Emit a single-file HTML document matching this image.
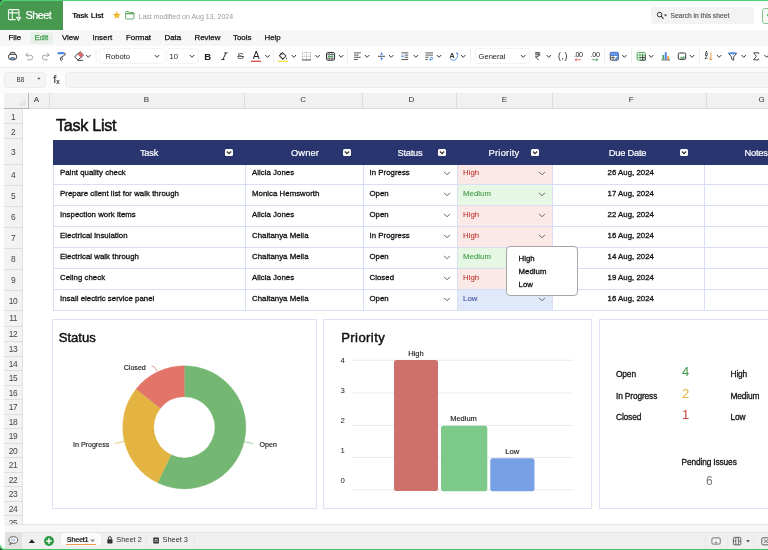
<!DOCTYPE html>
<html><head><meta charset="utf-8"><title>Task List</title>
<style>
*{box-sizing:border-box;margin:0;padding:0}
html,body{width:768px;height:550px;overflow:hidden;background:#fff}
body{font-family:"Liberation Sans",sans-serif;color:#222;position:relative}
#app{position:absolute;left:0;top:0;width:768px;height:550px;overflow:hidden;will-change:transform;background:#fff}
.abs{position:absolute}
.t{position:absolute;white-space:nowrap;line-height:1}
#top{left:0;top:0;width:768px;height:1.2px;background:#52cf72}
#bot{left:0;top:548.6px;width:768px;height:1.4px;background:#3cc760}
#logo{left:0;top:0px;width:63px;height:30px;background:#47994f}
#menubar{left:0;top:30px;width:768px;height:15.5px;background:#f7f7f7}
#toolbar{left:0;top:45.5px;width:768px;height:22px;background:#fff;border-bottom:1px solid #ececec}
#fbar{left:0;top:67.5px;width:768px;height:25px;background:#fcfcfc}
.box{position:absolute;background:#f5f5f5;border:1px solid #ececec;border-radius:3px}
.ch{position:absolute;top:93px;height:15.75px;background:#f1f1f1;border-right:1px solid #dcdcdc;border-bottom:1px solid #d9d9d9;font-size:8px;text-align:center;line-height:14px;color:#333}
.rh{position:absolute;left:4.4px;width:18.4px;padding-top:0.8px;letter-spacing:-0.4px;background:#f3f3f3;border-bottom:1px solid #dedede;border-right:1px solid #e2e2e2;font-size:8.4px;text-align:center;color:#444}
.menu{font-size:7.9px;color:#111;top:34px;-webkit-text-stroke:0.25px currentColor}
.cell{font-size:7.8px;letter-spacing:0.04px;color:#111;-webkit-text-stroke:0.3px currentColor}
.hl{position:absolute;height:1.1px;background:#d8def4}
.vl{position:absolute;width:1.1px;background:#d8def4}
.th{color:#fff;font-size:9.3px;letter-spacing:-0.25px;-webkit-text-stroke:0.2px #fff}
.fbtn{position:absolute;width:8px;height:7px;background:#fff;border-radius:1.5px}
.panel{position:absolute;border:1px solid #dde2f5;background:#fff}
</style></head><body><div id="app">

<div class="abs" id="logo"></div>
<div class="abs" id="menubar"></div><div class="abs" id="toolbar"></div><div class="abs" id="fbar"></div>
<div class="abs" id="top"></div>
<div class="t" style="left:25.5px;top:9.8px;font-size:11px;color:#fff;letter-spacing:-0.6px;-webkit-text-stroke:0.2px #fff">Sheet</div>
<div class="t" style="left:72.3px;top:11.9px;font-size:8px;font-weight:bold;color:#111;letter-spacing:-0.5px;word-spacing:1.2px">Task List</div>
<div class="t" style="left:138.5px;top:12.6px;font-size:7px;color:#9a9a9a">Last modified on Aug 13, 2024</div>
<div class="abs" style="left:651px;top:7px;width:103px;height:17px;background:#f3f3f3;border-radius:3px"></div>
<div class="t" style="left:670.5px;top:13.1px;font-size:6.7px;color:#555;-webkit-text-stroke:0.15px #555">Search in this sheet</div>
<div class="abs" style="left:762px;top:7.5px;width:10px;height:16px;border:1px solid #8cc592;border-radius:3px;background:#f3faf3"></div>
<div class="abs" style="left:30px;top:32px;width:23px;height:11.5px;background:#e7f1e8;border-radius:2px"></div>
<div class="t menu" style="left:8.5px;color:#111">File</div>
<div class="t menu" style="left:34.5px;color:#3c9a4b">Edit</div>
<div class="t menu" style="left:62px;color:#111">View</div>
<div class="t menu" style="left:92.5px;color:#111">Insert</div>
<div class="t menu" style="left:126px;color:#111">Format</div>
<div class="t menu" style="left:164.5px;color:#111">Data</div>
<div class="t menu" style="left:194.5px;color:#111">Review</div>
<div class="t menu" style="left:233px;color:#111">Tools</div>
<div class="t menu" style="left:264.5px;color:#111">Help</div>
<div class="box" style="left:4px;top:72px;width:41.5px;height:15.5px"></div>
<div class="t" style="left:16.5px;top:76.7px;font-size:6.3px;color:#333">B8</div>
<div class="box" style="left:65px;top:72px;width:720px;height:15.5px"></div>
<div class="ch" style="left:4.4px;width:24.4px;border-right:1.6px solid #b9b9b9;border-bottom:1.6px solid #b9b9b9;height:16.4px;border-radius:3px 0 0 0;z-index:2"></div>
<svg class="abs" style="left:17px;top:97px;z-index:3" width="10" height="10" viewBox="17 97 10 10"><rect x="23.85" y="99.14999999999999" width="0.9" height="0.9" fill="#c6c6c6"/><rect x="22.150000000000002" y="100.95" width="0.9" height="0.9" fill="#c6c6c6"/><rect x="23.85" y="100.95" width="0.9" height="0.9" fill="#c6c6c6"/><rect x="20.45" y="102.75" width="0.9" height="0.9" fill="#c6c6c6"/><rect x="22.150000000000002" y="102.75" width="0.9" height="0.9" fill="#c6c6c6"/><rect x="23.85" y="102.75" width="0.9" height="0.9" fill="#c6c6c6"/><rect x="18.75" y="104.55" width="0.9" height="0.9" fill="#c6c6c6"/><rect x="20.45" y="104.55" width="0.9" height="0.9" fill="#c6c6c6"/><rect x="22.150000000000002" y="104.55" width="0.9" height="0.9" fill="#c6c6c6"/><rect x="23.85" y="104.55" width="0.9" height="0.9" fill="#c6c6c6"/></svg>
<div class="ch" style="left:29px;width:20.5px;padding-right:4.6px">A</div>
<div class="ch" style="left:49.5px;width:195.0px">B</div>
<div class="ch" style="left:244.5px;width:118.5px">C</div>
<div class="ch" style="left:363px;width:94px;padding-left:4px">D</div>
<div class="ch" style="left:457px;width:96px">E</div>
<div class="ch" style="left:553px;width:153.5px;padding-left:4px">F</div>
<div class="ch" style="left:706.5px;width:111.0px">G</div>
<div class="rh" style="top:108.75px;height:15.50px;line-height:15.50px">1</div>
<div class="rh" style="top:124.25px;height:15.00px;line-height:15.00px">2</div>
<div class="rh" style="top:139.25px;height:25.25px;line-height:25.25px">3</div>
<div class="rh" style="top:164.50px;height:21.00px;line-height:21.00px">4</div>
<div class="rh" style="top:185.50px;height:21.00px;line-height:21.00px">5</div>
<div class="rh" style="top:206.50px;height:21.00px;line-height:21.00px">6</div>
<div class="rh" style="top:227.50px;height:21.00px;line-height:21.00px">7</div>
<div class="rh" style="top:248.50px;height:21.00px;line-height:21.00px">8</div>
<div class="rh" style="top:269.50px;height:21.00px;line-height:21.00px">9</div>
<div class="rh" style="top:290.50px;height:20.30px;line-height:20.30px">10</div>
<div class="rh" style="top:310.80px;height:15.90px;line-height:15.90px;padding-top:0">11</div>
<div class="rh" style="top:326.70px;height:15.70px;line-height:15.70px;padding-top:0">12</div>
<div class="rh" style="top:342.40px;height:14.50px;line-height:14.50px;padding-top:0">13</div>
<div class="rh" style="top:356.90px;height:14.50px;line-height:14.50px;padding-top:0">14</div>
<div class="rh" style="top:371.40px;height:14.50px;line-height:14.50px;padding-top:0">15</div>
<div class="rh" style="top:385.90px;height:14.50px;line-height:14.50px;padding-top:0">16</div>
<div class="rh" style="top:400.40px;height:14.50px;line-height:14.50px;padding-top:0">17</div>
<div class="rh" style="top:414.90px;height:14.50px;line-height:14.50px;padding-top:0">18</div>
<div class="rh" style="top:429.40px;height:14.50px;line-height:14.50px;padding-top:0">19</div>
<div class="rh" style="top:443.90px;height:14.50px;line-height:14.50px;padding-top:0">20</div>
<div class="rh" style="top:458.40px;height:14.50px;line-height:14.50px;padding-top:0">21</div>
<div class="rh" style="top:472.90px;height:14.50px;line-height:14.50px;padding-top:0">22</div>
<div class="rh" style="top:487.40px;height:14.50px;line-height:14.50px;padding-top:0">23</div>
<div class="rh" style="top:501.90px;height:14.50px;line-height:14.50px;padding-top:0">24</div>
<div class="rh" style="top:516.40px;height:14.50px;line-height:14.50px;padding-top:0">25</div>
<svg class="abs" style="left:0;top:0" width="768" height="93" viewBox="0 0 768 93"><g fill="none" stroke="#f0f8f1" stroke-width="1.15" stroke-linejoin="round"><path d="M19 16.2 V10.8 a1.2 1.2 0 0 0 -1.2 -1.2 H9.7 a1.2 1.2 0 0 0 -1.2 1.2 V18.4 a1.2 1.2 0 0 0 1.2 1.2 H15.6"/><path d="M8.5 12.8 H19 M12.3 9.6 V19.6"/><path d="M16.6 17.4 H20.6 L18.6 20.4 Z"/></g><polygon points="116.80,10.90 117.92,13.76 120.98,13.94 118.61,15.89 119.39,18.86 116.80,17.20 114.21,18.86 114.99,15.89 112.62,13.94 115.68,13.76" fill="#f2b731"/><path d="M125.6 12.6 a1 1 0 0 1 1 -1 H129 l0.9 1 H133 a1 1 0 0 1 1 1 V18 a1 1 0 0 1 -1 1 H126.6 a1 1 0 0 1 -1 -1 Z" fill="#fff" stroke="#5aa462" stroke-width="0.9"/><path d="M125.8 13.6 H134" stroke="#5aa462" stroke-width="1.4"/><circle cx="659.6" cy="14.6" r="2.3" fill="none" stroke="#333" stroke-width="1"/><path d="M661.3 16.4 L663.2 18.4" stroke="#333" stroke-width="1.1" stroke-linecap="round"/><path d="M664 14.6 h3 l-1.5 1.8 z" fill="#333"/><rect x="767" y="14" width="3" height="2.2" fill="#74b87c"/><rect x="10.3" y="52.4" width="4.6" height="2.6" rx="0.6" fill="#fff" stroke="#333" stroke-width="0.9"/><rect x="8.6" y="54.3" width="8" height="5" rx="1.8" fill="#fff" stroke="#333" stroke-width="1"/><rect x="10.6" y="57.6" width="4" height="2.4" rx="0.8" fill="#7aa7f0" stroke="#333" stroke-width="0.7"/><path d="M27.6 53 L25.9 55.2 L28.2 56.6 M26.2 55.2 H30.4 a2.3 2.3 0 0 1 0 4.6 H27.6" fill="none" stroke="#9b9b9b" stroke-width="0.9" stroke-linecap="round" stroke-linejoin="round"/><path d="M47.4 53 L49.1 55.2 L46.8 56.6 M48.8 55.2 H44.6 a2.3 2.3 0 0 0 0 4.6 H47.4" fill="none" stroke="#9b9b9b" stroke-width="0.9" stroke-linecap="round" stroke-linejoin="round"/><rect x="57.6" y="52.1" width="6.4" height="2.2" rx="0.9" fill="#4a86e8"/><path d="M64 53 Q65.8 53.2 65.2 54.8 Q63.5 56 61.6 56.8 Q60.4 57.6 60.4 59.2 Q60.5 60.6 61.6 60.4 Q62.6 60 62.2 58.4 Q62 57.2 61.4 56.9" fill="none" stroke="#333" stroke-width="0.9"/><g transform="rotate(-40 79 56)"><rect x="75.3" y="53.6" width="7.6" height="4.8" rx="1" fill="#fff" stroke="#333" stroke-width="0.9"/><rect x="79.2" y="53.9" width="3.6" height="4.2" rx="0.8" fill="#e06666"/></g><path d="M77.5 60.4 H83" stroke="#333" stroke-width="0.9"/><path d="M86.45 55.30 L88.40 57.30 L90.35 55.30" fill="none" stroke="#3a3a3a" stroke-width="1.0" stroke-linecap="round" stroke-linejoin="round"/><rect x="95.7" y="48.5" width="0.7" height="15" fill="#e6e6e6"/><rect x="273.0" y="48.5" width="0.7" height="15" fill="#e6e6e6"/><rect x="347.09999999999997" y="48.5" width="0.7" height="15" fill="#e6e6e6"/><rect x="470.3" y="48.5" width="0.7" height="15" fill="#e6e6e6"/><rect x="604.3000000000001" y="48.5" width="0.7" height="15" fill="#e6e6e6"/><rect x="631.2" y="48.5" width="0.7" height="15" fill="#e6e6e6"/><rect x="699.0" y="48.5" width="0.7" height="15" fill="#e6e6e6"/><rect x="99.2" y="48.6" width="65" height="14.8" rx="2" fill="#fff" stroke="#efefef" stroke-width="0.8"/><rect x="166.8" y="48.6" width="31.4" height="14.8" rx="2" fill="#fff" stroke="#efefef" stroke-width="0.8"/><rect x="475.4" y="48.6" width="54" height="14.8" rx="2" fill="#fff" stroke="#efefef" stroke-width="0.8"/><path d="M155.05 55.30 L157.00 57.30 L158.95 55.30" fill="none" stroke="#3a3a3a" stroke-width="1.0" stroke-linecap="round" stroke-linejoin="round"/><path d="M190.05 55.30 L192.00 57.30 L193.95 55.30" fill="none" stroke="#3a3a3a" stroke-width="1.0" stroke-linecap="round" stroke-linejoin="round"/><path d="M521.25 55.30 L523.20 57.30 L525.15 55.30" fill="none" stroke="#3a3a3a" stroke-width="1.0" stroke-linecap="round" stroke-linejoin="round"/><rect x="237" y="56" width="7.2" height="0.8" fill="#555"/><rect x="251" y="60.7" width="10" height="1.2" fill="#d33b3b"/><path d="M265.55 55.30 L267.50 57.30 L269.45 55.30" fill="none" stroke="#3a3a3a" stroke-width="1.0" stroke-linecap="round" stroke-linejoin="round"/><rect x="277.6" y="60.7" width="10.4" height="1.2" fill="#f5e33b"/><path d="M279.4 55.6 L282.6 52.6 L286 56 L282.8 59.2 Z" fill="#fff" stroke="#333" stroke-width="1.05" stroke-linejoin="round"/><path d="M280.2 52.6 L282.4 54.8" stroke="#333" stroke-width="1"/><path d="M286.6 57.6 q1 1.3 0 2.1 q-1 -0.8 0 -2.1 z" fill="#333"/><path d="M291.85 55.30 L293.80 57.30 L295.75 55.30" fill="none" stroke="#3a3a3a" stroke-width="1.0" stroke-linecap="round" stroke-linejoin="round"/><g stroke="#8a8a8a" stroke-width="0.7" stroke-dasharray="0.9 0.9" fill="none"><path d="M302.4 52.5 H310.6 M302.4 56.2 H310.6 M302.6 52.5 V59.6 M306.5 52.5 V59.6 M310.4 52.5 V59.6"/></g><rect x="302" y="59.4" width="9" height="1.1" fill="#555"/><path d="M315.65 55.30 L317.60 57.30 L319.55 55.30" fill="none" stroke="#3a3a3a" stroke-width="1.0" stroke-linecap="round" stroke-linejoin="round"/><rect x="326.5" y="52.5" width="8.1" height="7.7" rx="1.4" fill="#fff" stroke="#333" stroke-width="1"/><path d="M326.5 54.6 H334.6 M326.5 58.1 H334.6 M329.2 52.5 V54.6 M331.9 52.5 V54.6 M329.2 58.1 V60.2 M331.9 58.1 V60.2" stroke="#333" stroke-width="0.7"/><path d="M327.8 56.35 H333.3" stroke="#3c9a4b" stroke-width="1"/><path d="M329.6 55.3 L328.2 56.35 L329.6 57.4 M331.5 55.3 L332.9 56.35 L331.5 57.4" stroke="#3c9a4b" stroke-width="0.7" fill="none"/><path d="M339.25 55.30 L341.20 57.30 L343.15 55.30" fill="none" stroke="#3a3a3a" stroke-width="1.0" stroke-linecap="round" stroke-linejoin="round"/><g stroke="#444" stroke-width="0.9"><path d="M354 52.9 H360.8 M354 55.1 H358.6 M354 57.3 H360.8 M354 59.5 H357.8"/></g><path d="M365.15 55.30 L367.10 57.30 L369.05 55.30" fill="none" stroke="#3a3a3a" stroke-width="1.0" stroke-linecap="round" stroke-linejoin="round"/><path d="M378 56.3 H385.2" stroke="#444" stroke-width="0.9"/><g stroke="#3f7fe0" stroke-width="0.8" fill="none"><path d="M381.6 52 V55 M380.2 53.7 L381.6 55.1 L383 53.7 M381.6 60.6 V57.6 M380.2 58.9 L381.6 57.5 L383 58.9"/></g><path d="M389.25 55.30 L391.20 57.30 L393.15 55.30" fill="none" stroke="#3a3a3a" stroke-width="1.0" stroke-linecap="round" stroke-linejoin="round"/><g stroke="#444" stroke-width="0.9"><path d="M401.4 52.9 H408.2 M404.8 55.1 H408.2 M404.8 57.3 H408.2 M401.4 59.5 H408.2"/></g><path d="M401 56.2 H403.6 M402.5 55 L403.8 56.2 L402.5 57.4" stroke="#3f7fe0" stroke-width="0.8" fill="none"/><path d="M413.95 55.30 L415.90 57.30 L417.85 55.30" fill="none" stroke="#3a3a3a" stroke-width="1.0" stroke-linecap="round" stroke-linejoin="round"/><g stroke="#444" stroke-width="0.9"><path d="M425.4 52.9 H433 M425.4 55.1 H433 M425.4 57.3 H428.6 M425.4 59.5 H427.8"/></g><path d="M430 57.3 H431.6 a1.1 1.1 0 0 1 0 2.2 H429.6 M430.5 58.5 L429.4 59.5 L430.5 60.5" stroke="#3f7fe0" stroke-width="0.8" fill="none"/><path d="M437.05 55.30 L439.00 57.30 L440.95 55.30" fill="none" stroke="#3a3a3a" stroke-width="1.0" stroke-linecap="round" stroke-linejoin="round"/><path d="M457.2 53 Q458.6 58.6 454.4 60.2 Q451.2 60.8 450 58.4" fill="none" stroke="#3f7fe0" stroke-width="0.8"/><path d="M456 54 L457.2 52.6 L458.2 54.2" fill="none" stroke="#3f7fe0" stroke-width="0.8"/><path d="M461.25 55.30 L463.20 57.30 L465.15 55.30" fill="none" stroke="#3a3a3a" stroke-width="1.0" stroke-linecap="round" stroke-linejoin="round"/><path d="M535 52.8 H540.4 M535 54.8 H540.4 M535.6 52.8 H536.8 Q539.2 52.9 539.2 54.8 Q539.1 56.7 536.6 56.7 H535.4 L538.8 60.3" fill="none" stroke="#333" stroke-width="0.9"/><path d="M546.85 55.30 L548.80 57.30 L550.75 55.30" fill="none" stroke="#3a3a3a" stroke-width="1.0" stroke-linecap="round" stroke-linejoin="round"/><path d="M575 59.7 H581 M576.6 58.5 L575 59.7 L576.6 60.9" stroke="#d9534f" stroke-width="0.8" fill="none"/><path d="M591.8 59.7 H597.8 M596.2 58.5 L597.8 59.7 L596.2 60.9" stroke="#3c9a4b" stroke-width="0.8" fill="none"/><rect x="610.3" y="52.4" width="8" height="7.8" rx="1.2" fill="#fff" stroke="#333" stroke-width="0.9"/><path d="M610.3 55.2 H618.3 M613 52.4 V60.2 M610.3 57.7 H615" stroke="#333" stroke-width="0.7"/><path d="M610.3 55.2 V53.4 a1 1 0 0 1 1 -1 H617.3 a1 1 0 0 1 1 1 V55.2 Z" fill="#6f9cf0" stroke="#3f7fe0" stroke-width="0.9"/><path d="M615 60.4 L615.4 58.4 L618.2 55.8 L619 56.8 L616.6 59.8 Z" fill="#3f7fe0"/><path d="M622.45 55.30 L624.40 57.30 L626.35 55.30" fill="none" stroke="#3a3a3a" stroke-width="1.0" stroke-linecap="round" stroke-linejoin="round"/><rect x="637.2" y="52.4" width="8.2" height="7.8" rx="1" fill="#fff" stroke="#4aa557" stroke-width="0.9"/><path d="M637.2 55 H645.4 M637.2 57.6 H645.4 M640 52.4 V60.2 M642.7 52.4 V60.2" stroke="#4aa557" stroke-width="0.8"/><path d="M640 57.6 H645.4 M642.7 55 V60.2 M645.4 55 V60.2 M640 60.2 H645.4" stroke="#333" stroke-width="0.7"/><path d="M649.25 55.30 L651.20 57.30 L653.15 55.30" fill="none" stroke="#3a3a3a" stroke-width="1.0" stroke-linecap="round" stroke-linejoin="round"/><rect x="662.4" y="55" width="1.8" height="4.4" fill="#4aa557"/><rect x="664.8" y="52.2" width="1.9" height="7.2" fill="#4a86e8"/><rect x="667.3" y="56.2" width="1.8" height="3.2" fill="#f0913a"/><rect x="661.4" y="59.5" width="8.6" height="0.9" fill="#555"/><rect x="678.3" y="53" width="7.4" height="6.4" rx="1.3" fill="#fff" stroke="#333" stroke-width="1"/><path d="M679.4 58.6 L681.4 56.4 L682.6 57.6 L684 55.8 L684.8 58.6 Z" fill="#4aa557"/><path d="M690.05 55.30 L692.00 57.30 L693.95 55.30" fill="none" stroke="#3a3a3a" stroke-width="1.0" stroke-linecap="round" stroke-linejoin="round"/><path d="M710.9 52.6 V60 M709.5 58.6 L710.9 60.2 L712.3 58.6" stroke="#f0913a" stroke-width="0.9" fill="none"/><path d="M717.15 55.30 L719.10 57.30 L721.05 55.30" fill="none" stroke="#3a3a3a" stroke-width="1.0" stroke-linecap="round" stroke-linejoin="round"/><path d="M728.6 53.4 H736.6 L733.6 57 V60.2 L731.6 59.2 V57 Z" fill="#fff" stroke="#333" stroke-width="0.9" stroke-linejoin="round"/><path d="M728.4 53.3 Q732.6 51.6 736.8 53.3 Q732.6 55 728.4 53.3 Z" fill="#8fb6f5" stroke="#3f7fe0" stroke-width="0.8"/><path d="M741.75 55.30 L743.70 57.30 L745.65 55.30" fill="none" stroke="#3a3a3a" stroke-width="1.0" stroke-linecap="round" stroke-linejoin="round"/><path d="M758.6 54 V52.8 H753.6 L756.4 56.3 L753.6 59.8 H758.6 V58.6" fill="none" stroke="#333" stroke-width="0.9" stroke-linejoin="round"/><path d="M764.65 55.30 L766.60 57.30 L768.55 55.30" fill="none" stroke="#3a3a3a" stroke-width="1.0" stroke-linecap="round" stroke-linejoin="round"/><path d="M37.3 77.8 h3.2 l-1.6 1.9 z" fill="#555"/></svg>
<div class="t" style="left:105.5px;top:52.6px;font-size:7.6px;color:#222">Roboto</div>
<div class="t" style="left:169.5px;top:52.6px;font-size:7.6px;color:#222">10</div>
<div class="t" style="left:478.5px;top:52.6px;font-size:7.6px;color:#222">General</div>
<div class="t" style="left:204.3px;top:51.6px;font-size:9.6px;font-weight:bold;color:#222">B</div>
<svg class="abs" style="left:220px;top:50px" width="10" height="12" viewBox="220 50 10 12"><path d="M224.3 52.9 H227.5 M221.3 59.5 H224.5 M225.9 52.9 L222.9 59.5" fill="none" stroke="#222" stroke-width="0.95"/></svg>
<div class="t" style="left:237.3px;top:51.4px;font-size:9.9px;color:#444">S</div>
<div class="t" style="left:252.8px;top:50.6px;font-size:10.4px;color:#222">A</div>
<div class="t" style="left:449.6px;top:51.6px;font-size:7.2px;font-weight:bold;color:#333">A</div>
<div class="t" style="left:558px;top:51.8px;font-size:8.6px;color:#222;letter-spacing:0.6px">(,)</div>
<div class="t" style="left:574px;top:51.4px;font-size:7.2px;color:#222;letter-spacing:-0.45px">.00</div>
<div class="t" style="left:590.8px;top:51.4px;font-size:7.2px;color:#222;letter-spacing:-0.45px">.00</div>
<div class="t" style="left:704.8px;top:52px;font-size:4.6px;font-weight:bold;color:#222;line-height:4.2px;white-space:normal;width:4px">A<br>Z</div>
<div class="t" style="left:53.2px;top:74.3px;font-size:11.5px;color:#333">f</div>
<div class="t" style="left:56.3px;top:78.8px;font-size:6.6px;color:#333;-webkit-text-stroke:0.2px #333">x</div>
<div class="t" style="left:56px;top:117.3px;font-size:16.2px;letter-spacing:-0.3px;color:#111;-webkit-text-stroke:0.5px #111">Task List</div>
<div class="abs" style="left:52.5px;top:140px;width:720px;height:24.5px;background:#28356f"></div>
<div class="abs" style="left:457.5px;top:164.5px;width:94.5px;height:19.6px;background:#fbe9e7"></div>
<div class="abs" style="left:457.5px;top:184.1px;width:94.5px;height:21.0px;background:#e6f7e4"></div>
<div class="abs" style="left:457.5px;top:205.1px;width:94.5px;height:21.0px;background:#fbe9e7"></div>
<div class="abs" style="left:457.5px;top:226.1px;width:94.5px;height:21.0px;background:#fbe9e7"></div>
<div class="abs" style="left:457.5px;top:247.1px;width:94.5px;height:21.0px;background:#e6f7e4"></div>
<div class="abs" style="left:457.5px;top:268.1px;width:94.5px;height:21.0px;background:#fbe9e7"></div>
<div class="abs" style="left:457.5px;top:289.1px;width:94.5px;height:21.0px;background:#dfe9fa"></div>
<div class="hl" style="left:52.5px;top:183.6px;width:720px"></div>
<div class="hl" style="left:52.5px;top:204.6px;width:720px"></div>
<div class="hl" style="left:52.5px;top:225.6px;width:720px"></div>
<div class="hl" style="left:52.5px;top:246.6px;width:720px"></div>
<div class="hl" style="left:52.5px;top:267.6px;width:720px"></div>
<div class="hl" style="left:52.5px;top:288.6px;width:720px"></div>
<div class="hl" style="left:52.5px;top:309.6px;width:720px"></div>
<div class="vl" style="left:52.5px;top:164.5px;height:145.8px"></div>
<div class="vl" style="left:245.4px;top:164.5px;height:145.8px"></div>
<div class="vl" style="left:363.2px;top:164.5px;height:145.8px"></div>
<div class="vl" style="left:457px;top:164.5px;height:145.8px"></div>
<div class="vl" style="left:552px;top:164.5px;height:145.8px"></div>
<div class="vl" style="left:704px;top:164.5px;height:145.8px"></div>
<div class="t th" style="left:149px;top:149px;transform:translateX(-50%)">Task</div>
<div class="t th" style="left:305px;top:149px;transform:translateX(-50%);letter-spacing:0.15px">Owner</div>
<div class="t th" style="left:410px;top:149px;transform:translateX(-50%)">Status</div>
<div class="t th" style="left:504px;top:149px;transform:translateX(-50%);letter-spacing:0.25px">Priority</div>
<div class="t th" style="left:627.5px;top:149px;transform:translateX(-50%)">Due Date</div>
<div class="t th" style="left:744.5px;top:149px">Notes</div>
<div class="fbtn" style="left:224.9px;top:148.9px"><svg width="8" height="7" viewBox="0 0 8 7" style="display:block"><path d="M1.9 2.5 L4 4.7 L6.1 2.5" fill="none" stroke="#333" stroke-width="1.2"/></svg></div>
<div class="fbtn" style="left:343.4px;top:148.9px"><svg width="8" height="7" viewBox="0 0 8 7" style="display:block"><path d="M1.9 2.5 L4 4.7 L6.1 2.5" fill="none" stroke="#333" stroke-width="1.2"/></svg></div>
<div class="fbtn" style="left:438.4px;top:148.9px"><svg width="8" height="7" viewBox="0 0 8 7" style="display:block"><path d="M1.9 2.5 L4 4.7 L6.1 2.5" fill="none" stroke="#333" stroke-width="1.2"/></svg></div>
<div class="fbtn" style="left:530.9px;top:148.9px"><svg width="8" height="7" viewBox="0 0 8 7" style="display:block"><path d="M1.9 2.5 L4 4.7 L6.1 2.5" fill="none" stroke="#333" stroke-width="1.2"/></svg></div>
<div class="fbtn" style="left:680.4px;top:148.9px"><svg width="8" height="7" viewBox="0 0 8 7" style="display:block"><path d="M1.9 2.5 L4 4.7 L6.1 2.5" fill="none" stroke="#333" stroke-width="1.2"/></svg></div>
<div class="t cell" style="left:60px;top:169px">Paint quality check</div>
<div class="t cell" style="left:252px;top:169px">Alicia Jones</div>
<div class="t cell" style="left:369.5px;top:169px">In Progress</div>
<div class="t cell" style="left:463px;top:169px;color:#c0392f;-webkit-text-stroke:0.1px currentColor">High</div>
<div class="t cell" style="left:607.5px;top:169px">26 Aug, 2024</div>
<div class="abs" style="left:443px;top:170.5px"><svg width="8" height="5" viewBox="0 0 8 5" style="display:block"><path d="M1 0.8 L4 3.8 L7 0.8" fill="none" stroke="#555" stroke-width="0.9"/></svg></div>
<div class="abs" style="left:538px;top:170.5px"><svg width="8" height="5" viewBox="0 0 8 5" style="display:block"><path d="M1 0.8 L4 3.8 L7 0.8" fill="none" stroke="#555" stroke-width="0.9"/></svg></div>
<div class="t cell" style="left:60px;top:190px">Prepare client list for walk through</div>
<div class="t cell" style="left:252px;top:190px">Monica Hemsworth</div>
<div class="t cell" style="left:369.5px;top:190px">Open</div>
<div class="t cell" style="left:463px;top:190px;color:#3f9a48;-webkit-text-stroke:0.1px currentColor">Medium</div>
<div class="t cell" style="left:607.5px;top:190px">17 Aug, 2024</div>
<div class="abs" style="left:443px;top:191.5px"><svg width="8" height="5" viewBox="0 0 8 5" style="display:block"><path d="M1 0.8 L4 3.8 L7 0.8" fill="none" stroke="#555" stroke-width="0.9"/></svg></div>
<div class="abs" style="left:538px;top:191.5px"><svg width="8" height="5" viewBox="0 0 8 5" style="display:block"><path d="M1 0.8 L4 3.8 L7 0.8" fill="none" stroke="#555" stroke-width="0.9"/></svg></div>
<div class="t cell" style="left:60px;top:211px">Inspection work items</div>
<div class="t cell" style="left:252px;top:211px">Alicia Jones</div>
<div class="t cell" style="left:369.5px;top:211px">Open</div>
<div class="t cell" style="left:463px;top:211px;color:#c0392f;-webkit-text-stroke:0.1px currentColor">High</div>
<div class="t cell" style="left:607.5px;top:211px">22 Aug, 2024</div>
<div class="abs" style="left:443px;top:212.5px"><svg width="8" height="5" viewBox="0 0 8 5" style="display:block"><path d="M1 0.8 L4 3.8 L7 0.8" fill="none" stroke="#555" stroke-width="0.9"/></svg></div>
<div class="abs" style="left:538px;top:212.5px"><svg width="8" height="5" viewBox="0 0 8 5" style="display:block"><path d="M1 0.8 L4 3.8 L7 0.8" fill="none" stroke="#555" stroke-width="0.9"/></svg></div>
<div class="t cell" style="left:60px;top:232px">Electrical insulation</div>
<div class="t cell" style="left:252px;top:232px">Chaitanya Mella</div>
<div class="t cell" style="left:369.5px;top:232px">In Progress</div>
<div class="t cell" style="left:463px;top:232px;color:#c0392f;-webkit-text-stroke:0.1px currentColor">High</div>
<div class="t cell" style="left:607.5px;top:232px">16 Aug, 2024</div>
<div class="abs" style="left:443px;top:233.5px"><svg width="8" height="5" viewBox="0 0 8 5" style="display:block"><path d="M1 0.8 L4 3.8 L7 0.8" fill="none" stroke="#555" stroke-width="0.9"/></svg></div>
<div class="abs" style="left:538px;top:233.5px"><svg width="8" height="5" viewBox="0 0 8 5" style="display:block"><path d="M1 0.8 L4 3.8 L7 0.8" fill="none" stroke="#555" stroke-width="0.9"/></svg></div>
<div class="t cell" style="left:60px;top:253px">Electrical walk through</div>
<div class="t cell" style="left:252px;top:253px">Chaitanya Mella</div>
<div class="t cell" style="left:369.5px;top:253px">Open</div>
<div class="t cell" style="left:463px;top:253px;color:#3f9a48;-webkit-text-stroke:0.1px currentColor">Medium</div>
<div class="t cell" style="left:607.5px;top:253px">14 Aug, 2024</div>
<div class="abs" style="left:443px;top:254.5px"><svg width="8" height="5" viewBox="0 0 8 5" style="display:block"><path d="M1 0.8 L4 3.8 L7 0.8" fill="none" stroke="#555" stroke-width="0.9"/></svg></div>
<div class="abs" style="left:538px;top:254.5px"><svg width="8" height="5" viewBox="0 0 8 5" style="display:block"><path d="M1 0.8 L4 3.8 L7 0.8" fill="none" stroke="#555" stroke-width="0.9"/></svg></div>
<div class="t cell" style="left:60px;top:274px">Celing check</div>
<div class="t cell" style="left:252px;top:274px">Alicia Jones</div>
<div class="t cell" style="left:369.5px;top:274px">Closed</div>
<div class="t cell" style="left:463px;top:274px;color:#c0392f;-webkit-text-stroke:0.1px currentColor">High</div>
<div class="t cell" style="left:607.5px;top:274px">19 Aug, 2024</div>
<div class="abs" style="left:443px;top:275.5px"><svg width="8" height="5" viewBox="0 0 8 5" style="display:block"><path d="M1 0.8 L4 3.8 L7 0.8" fill="none" stroke="#555" stroke-width="0.9"/></svg></div>
<div class="abs" style="left:538px;top:275.5px"><svg width="8" height="5" viewBox="0 0 8 5" style="display:block"><path d="M1 0.8 L4 3.8 L7 0.8" fill="none" stroke="#555" stroke-width="0.9"/></svg></div>
<div class="t cell" style="left:60px;top:295px">Insall electric service panel</div>
<div class="t cell" style="left:252px;top:295px">Chaitanya Mella</div>
<div class="t cell" style="left:369.5px;top:295px">Open</div>
<div class="t cell" style="left:463px;top:295px;color:#3b4fa0;-webkit-text-stroke:0.1px currentColor">Low</div>
<div class="t cell" style="left:607.5px;top:295px">16 Aug, 2024</div>
<div class="abs" style="left:443px;top:296.5px"><svg width="8" height="5" viewBox="0 0 8 5" style="display:block"><path d="M1 0.8 L4 3.8 L7 0.8" fill="none" stroke="#555" stroke-width="0.9"/></svg></div>
<div class="abs" style="left:538px;top:296.5px"><svg width="8" height="5" viewBox="0 0 8 5" style="display:block"><path d="M1 0.8 L4 3.8 L7 0.8" fill="none" stroke="#555" stroke-width="0.9"/></svg></div>
<div class="abs" style="left:506px;top:246px;width:71.5px;height:49.5px;background:#fff;border:1.2px solid #a6a6a6;border-radius:4px"></div>
<div class="t cell" style="left:518.5px;top:254.6px">High</div>
<div class="t cell" style="left:518.5px;top:267.6px">Medium</div>
<div class="t cell" style="left:518.5px;top:280.6px">Low</div>
<div class="panel" style="left:52px;top:319px;width:265px;height:189.5px"></div>
<div class="panel" style="left:323px;top:319px;width:269px;height:189.5px"></div>
<div class="panel" style="left:598.5px;top:319px;width:200px;height:189.5px"></div>
<div class="t" style="left:58.7px;top:331.1px;font-size:13.1px;color:#111;-webkit-text-stroke:0.45px #111">Status</div>
<div class="t" style="left:341.2px;top:331.1px;font-size:13.1px;letter-spacing:0.4px;color:#111;-webkit-text-stroke:0.45px #111">Priority</div>
<svg class="abs" style="left:0;top:0" width="768" height="550" viewBox="0 0 768 550"><path d="M184.30 365.70 A61.6 61.6 0 1 1 157.57 482.80 L171.02 454.87 A30.6 30.6 0 1 0 184.30 396.70 Z" fill="#74b772" stroke="#74b772" stroke-width="0.35"/><path d="M157.57 482.80 A61.6 61.6 0 0 1 136.14 388.89 L160.38 408.22 A30.6 30.6 0 0 0 171.02 454.87 Z" fill="#e3b442" stroke="#e3b442" stroke-width="0.35"/><path d="M136.14 388.89 A61.6 61.6 0 0 1 184.30 365.70 L184.30 396.70 A30.6 30.6 0 0 0 160.38 408.22 Z" fill="#e27468" stroke="#e27468" stroke-width="0.35"/><path d="M151.5 365.8 Q155.5 366.5 157 371" fill="none" stroke="#e27468" stroke-width="0.7"/><path d="M115 443.2 Q120 443 124 441.3" fill="none" stroke="#e3b442" stroke-width="0.7"/><path d="M244.5 441.8 Q249 442.5 253 443.6" fill="none" stroke="#74b772" stroke-width="0.7"/><rect x="352" y="359.8" width="221" height="0.8" fill="#e6e6e6"/><rect x="352" y="392.6" width="221" height="0.8" fill="#e6e6e6"/><rect x="352" y="425.20000000000005" width="221" height="0.8" fill="#e6e6e6"/><rect x="352" y="457.20000000000005" width="221" height="0.8" fill="#e6e6e6"/><rect x="352" y="489.40000000000003" width="221" height="0.8" fill="#e6e6e6"/><rect x="394" y="360" width="44" height="131" rx="2.5" fill="#ce706c"/><rect x="441" y="425.8" width="46.3" height="65.4" rx="2.5" fill="#7cc98a"/><rect x="490.3" y="458.3" width="44.2" height="33" rx="2.5" fill="#78a0e4"/></svg>
<div class="t" style="left:123.7px;top:365.3px;font-size:7.1px;color:#222;-webkit-text-stroke:0.15px #222">Closed</div>
<div class="t" style="left:73px;top:441.9px;font-size:7.1px;color:#222;-webkit-text-stroke:0.15px #222">In Progress</div>
<div class="t" style="left:259.5px;top:441.8px;font-size:7.1px;color:#222;-webkit-text-stroke:0.15px #222">Open</div>
<div class="t" style="left:408.2px;top:350.2px;font-size:7.5px;color:#222;-webkit-text-stroke:0.15px #222">High</div>
<div class="t" style="left:450.2px;top:414.8px;font-size:7.5px;color:#222;-webkit-text-stroke:0.15px #222">Medium</div>
<div class="t" style="left:505.2px;top:447.8px;font-size:7.7px;color:#222;-webkit-text-stroke:0.15px #222">Low</div>
<div class="t" style="left:340.6px;top:357px;font-size:7.8px;color:#222">4</div>
<div class="t" style="left:340.6px;top:387px;font-size:7.8px;color:#222">3</div>
<div class="t" style="left:340.6px;top:417px;font-size:7.8px;color:#222">2</div>
<div class="t" style="left:340.6px;top:447px;font-size:7.8px;color:#222">1</div>
<div class="t" style="left:340.6px;top:477px;font-size:7.8px;color:#222">0</div>
<div class="t" style="left:616px;top:370.0px;font-size:8.4px;letter-spacing:-0.15px;color:#111;-webkit-text-stroke:0.28px #111">Open</div>
<div class="t" style="left:616px;top:391.5px;font-size:8.4px;letter-spacing:-0.15px;color:#111;-webkit-text-stroke:0.28px #111">In Progress</div>
<div class="t" style="left:616px;top:412.5px;font-size:8.4px;letter-spacing:-0.15px;color:#111;-webkit-text-stroke:0.28px #111">Closed</div>
<div class="t" style="left:730.5px;top:370.0px;font-size:8.4px;letter-spacing:-0.15px;color:#111;-webkit-text-stroke:0.28px #111">High</div>
<div class="t" style="left:730.5px;top:391.5px;font-size:8.4px;letter-spacing:-0.15px;color:#111;-webkit-text-stroke:0.28px #111">Medium</div>
<div class="t" style="left:730.5px;top:412.5px;font-size:8.4px;letter-spacing:-0.15px;color:#111;-webkit-text-stroke:0.28px #111">Low</div>
<div class="t" style="left:682px;top:365.0px;font-size:13px;color:#3f9a48">4</div>
<div class="t" style="left:682px;top:386.5px;font-size:13px;color:#e3b13a">2</div>
<div class="t" style="left:682px;top:408.0px;font-size:13px;color:#c8453d">1</div>
<div class="t" style="left:681.5px;top:458px;font-size:8.4px;letter-spacing:-0.15px;color:#111;-webkit-text-stroke:0.28px #111">Pending Issues</div>
<div class="t" style="left:706px;top:474.7px;font-size:12px;color:#7a7a7a">6</div>
<div class="abs" style="left:0;top:524px;width:768px;height:8px;background:#f7f7f7;border-top:1px solid #e4e4e4"></div>
<div class="abs" style="left:0;top:524px;width:4.7px;height:25px;background:#fff"></div>
<div class="abs" style="left:4.7px;top:531.7px;width:764px;height:17px;background:#efefef;border-top:0.6px solid #e6e6e6"></div>
<div class="abs" style="left:4.7px;top:532px;width:17.3px;height:16.6px;background:#e2e2e2"></div>
<div class="abs" style="left:61.3px;top:533px;width:40px;height:12.8px;background:#fbfbfb;border-radius:3px;box-shadow:0 0 1px rgba(0,0,0,0.15)"></div>
<div class="abs" style="left:65.5px;top:543.7px;width:30px;height:1.2px;background:#ef9a4e"></div>
<div class="t" style="left:66.8px;top:535.6px;font-size:7.3px;font-weight:bold;color:#222;letter-spacing:-0.42px">Sheet1</div>
<div class="t" style="left:116.3px;top:535.6px;font-size:7.4px;color:#333">Sheet 2</div>
<div class="t" style="left:162.5px;top:535.6px;font-size:7.4px;color:#333">Sheet 3</div>
<svg class="abs" style="left:0;top:524px" width="768" height="26" viewBox="0 524 768 26"><ellipse cx="13.3" cy="540" rx="4.4" ry="3.3" fill="#f2f2f2" stroke="#444" stroke-width="0.8"/><path d="M10.6 542.4 L9.6 544.6 L12.4 543.2" fill="#f2f2f2" stroke="#444" stroke-width="0.8" stroke-linejoin="round"/><rect x="11.2" y="539.4" width="4.2" height="1" rx="0.5" fill="#7f9fe0"/><path d="M28.8 543 L31.9 539.3 L35 543 Z" fill="#222"/><circle cx="49" cy="541" r="4.9" fill="#2f9a44"/><path d="M46.3 541 H51.7 M49 538.3 V543.7" stroke="#fff" stroke-width="1.5"/><path d="M90.2 539.6 h4.8 l-2.4 2.6 z" fill="#8a8a8a"/><rect x="146.0" y="532.5" width="0.6" height="15.5" fill="#e2e2e2"/><rect x="194.2" y="532.5" width="0.6" height="15.5" fill="#e2e2e2"/><rect x="704.8000000000001" y="532.5" width="0.6" height="15.5" fill="#e2e2e2"/><rect x="727.1" y="532.5" width="0.6" height="15.5" fill="#e2e2e2"/><rect x="753.6" y="532.5" width="0.6" height="15.5" fill="#e2e2e2"/><rect x="107.3" y="539.2" width="5.2" height="4.2" rx="0.6" fill="#333"/><path d="M108.5 539.4 V538 a1.4 1.4 0 0 1 2.8 0 V539.4" fill="none" stroke="#333" stroke-width="0.9"/><rect x="153.3" y="537.6" width="5.6" height="5.8" rx="0.6" fill="#333"/><rect x="154.6" y="539" width="3" height="0.8" fill="#eee"/><rect x="154.6" y="540.6" width="1" height="1.4" fill="#eee"/><rect x="156.6" y="540.6" width="1" height="1.4" fill="#eee"/><rect x="711.8" y="537.8" width="8.6" height="6.4" rx="1.6" fill="#ddd" stroke="#777" stroke-width="0.9"/><rect x="713.4" y="539.4" width="2.2" height="3" fill="#fff"/><rect x="716.4" y="539.4" width="2.2" height="3" fill="#fff"/><rect x="715" y="541.6" width="2" height="1.6" fill="#888"/><rect x="733.4" y="537.4" width="7.4" height="7.4" rx="1" fill="#eee" stroke="#555" stroke-width="0.9"/><path d="M735.8 537.4 V544.8 M738.4 537.4 V544.8 M733.4 541.1 H735.8 M738.4 541.1 H740.8" stroke="#555" stroke-width="0.8"/><path d="M746.3 540.3 h3.4 l-1.7 2 z" fill="#222"/><rect x="761.8" y="537.8" width="9" height="7" rx="1.2" fill="#eee" stroke="#555" stroke-width="0.9"/><path d="M764 539.6 L768 543 M768 539.6 L764 543" stroke="#555" stroke-width="0.8"/></svg>
<div class="abs" id="bot"></div>
<svg class="abs" style="left:0;top:0;z-index:9" width="6" height="6" viewBox="0 0 6 6"><path d="M0 0 H4.5 A4.5 4.5 0 0 0 0 4.5 Z" fill="#3b4a3f"/><path d="M4.8 0.6 A4.4 4.4 0 0 0 0.6 4.8" fill="none" stroke="#3fd867" stroke-width="1.2"/></svg>
<svg class="abs" style="left:0;top:544px;z-index:9" width="6" height="6" viewBox="0 0 6 6"><path d="M0 6 V1.5 A4.5 4.5 0 0 0 4.5 6 Z" fill="#3b4a3f"/><path d="M0.6 1.2 A4.4 4.4 0 0 0 4.8 5.4" fill="none" stroke="#3fd867" stroke-width="1.2"/></svg>
</div></body></html>
